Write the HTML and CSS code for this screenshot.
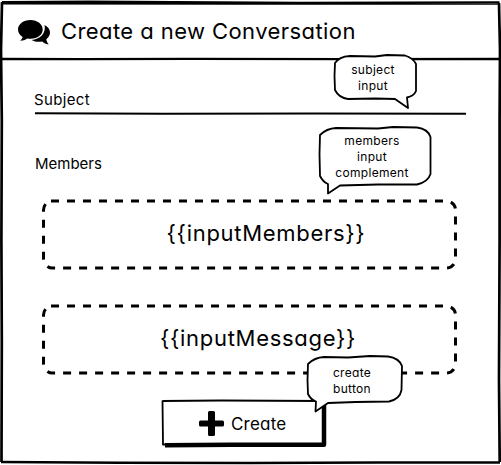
FILE: index.html
```html
<!DOCTYPE html>
<html lang="en">
<head>
<meta charset="utf-8">
<title>Create a new Conversation</title>
<link rel="stylesheet" href="styles.css">
</head>
<body>
<main class="window">
  <svg class="sketch frame" viewBox="0 0 501 465" aria-hidden="true">
    <path d="M2 2.2 L90 1.8 L300 3 L499.5 2.5 M2 3.4 L240 3.6 L499 3.5" stroke-width="2.4"/>
    <path d="M2 2 L1 50 L1.8 120 L1.4 240 L1.8 340 L1.5 462" stroke-width="2.7"/>
    <path d="M499 3 L500 50 L499.6 120 L499.6 240 L499 380 L499.7 462" stroke-width="2.7"/>
    <path d="M1 462 L120 462.8 L250 463 L380 462.5 L500 462.5" stroke-width="2.5"/>
    <path d="M0 59 L80 59.2 L190 58.9 L350 59.2 L501 59" stroke-width="2.3"/>
  </svg>
  <header class="header">
    <svg class="chat" viewBox="0 0 33 26" aria-hidden="true">
      <path d="M12.5 0C5.4 0 0 4.2 0 9.5c0 3.2 1.8 5.8 4.6 7.5-.3 1.500-1.200 2.600-2.400 3.700 2.700-.1 5-.9 7-2.300 1.100.2 2.100.3 3.300.3C19.500 18.700 24.700 14.700 24.700 9.500S19.500 0 12.500 0z"/>
      <path d="M26.500 5c3.500 1.700 5.500 4.300 5.500 7.500 0 2.800-1.500 5.100-3.700 6.700.2 1.900 1.100 3.400 2.500 5.300-2.900-.4-4.900-1.400-6.700-3-3.900.7-7.600.1-10.500-1.600C21.600 19.500 28.500 13.500 26.500 5z"/>
    </svg>
    <h1 class="title">Create a new Conversation</h1>
  </header>
  <section class="form">
    <label class="label subject">Subject</label>
    <svg class="sketch rule" viewBox="0 0 434 4" aria-hidden="true"><path d="M1 1.300L130 1.800 280 1.500 432 1.800" stroke-width="2"/></svg>
    <label class="label members">Members</label>
    <div class="slot">
      <svg class="sketch outline" viewBox="0 0 417 71" aria-hidden="true"><path class="dashes" d="M10 2H405.500a9 9 0 0 1 9 9V60a9 9 0 0 1-9 9H11.500a9 9 0 0 1-9-9V11a9 9 0 0 1 7.500-9"/></svg>
      <span class="slot-text slot-members">{{inputMembers}}</span>
    </div>
    <div class="slot slot-last">
      <svg class="sketch outline" viewBox="0 0 417 71" aria-hidden="true"><path class="dashes" d="M10 2H405.500a9 9 0 0 1 9 9V60a9 9 0 0 1-9 9H11.500a9 9 0 0 1-9-9V11a9 9 0 0 1 7.500-9"/></svg>
      <span class="slot-text slot-message">{{inputMessage}}</span>
    </div>
    <button class="create" type="button">
      <svg class="sketch button-outline" viewBox="0 0 166 50" aria-hidden="true">
        <path d="M1.500 2L60 1.500 161 2M1.500 1.500L2 45.500H8" stroke-width="1.800"/>
        <path d="M4 46.300L70 45.700 163 45.800V2" stroke-width="4.500"/>
      </svg>
      <svg class="plus" viewBox="0 0 25 25" aria-hidden="true"><path d="M10.500 0h4q1.500 0 1.500 1.500V9.500h7.500q1.500 0 1.500 1.500v3q0 1.500-1.500 1.500H16v8q0 1.500-1.500 1.500h-4Q9 25 9 23.500v-8H1.500Q0 15.500 0 14v-3Q0 9.500 1.500 9.500H9v-8Q9 0 10.500 0z"/></svg>
      <span class="create-text">Create</span>
    </button>
  </section>
  <aside class="note note-subject">
    <svg class="sketch bubble" viewBox="0 0 86 56" aria-hidden="true"><path d="M2 9C5 4 11 2.300 17 2L42 2.500 54 1 72 1.500Q80 4 83 10L83 37Q81 42 74 43.500L75 54 62 45 42 44.500 15 45Q6 44 2 36L1.500 22Z"/></svg>
    <span>subject<br>input</span>
  </aside>
  <aside class="note note-members">
    <svg class="sketch bubble" viewBox="0 0 115 70" aria-hidden="true"><path d="M2 9C7 4 12 2.300 18 2L60 2.500 75 1 99 1.500Q110 3 112.500 11L112.500 48Q110 56 99 58.500L60 58.500 22 59.500 10 67.500 10 58Q5 56 2 50L1.500 28Z"/></svg>
    <span>members<br>input<br>complement</span>
  </aside>
  <aside class="note note-create">
    <svg class="sketch bubble" viewBox="0 0 98 60" aria-hidden="true"><path d="M2 9C7 4 12 2.300 18 2L42 2.500 64 1 82 1.500Q93 3 96 11L95.500 35Q94 44 83 46.500L50 47 22 48 9.500 56.500 10 46.500Q5 45 2 39L1.500 25Z"/></svg>
    <span>create<br>button</span>
  </aside>
</main>
</body>
</html>
```

FILE: styles.css
```css
* { box-sizing: border-box; }
body { margin: 0; background: #fff; color: #000; font-family: Inter, "Liberation Sans", sans-serif; font-feature-settings: "cv11" 1; overflow: hidden; }
.window { position: relative; width: 501px; height: 465px; display: flex; flex-direction: column; }
.sketch { fill: none; stroke: #000; stroke-linejoin: round; display: block; }
.frame { position: absolute; inset: 0; width: 501px; height: 465px; }
.header { height: 60px; display: flex; align-items: flex-start; padding: 20px 0 0 18px; gap: 10px; }
.chat { width: 33px; height: 26px; flex: none; }
.title { margin: -3px 0 0; font-size: 22px; line-height: 28px; font-weight: 400; white-space: nowrap; letter-spacing: 0.42px; }
.form { display: flex; flex-direction: column; padding: 30px 34px 0; }
.label { font-size: 15px; line-height: 20px; }
.subject { letter-spacing: 0.35px; }
.rule { width: 434px; height: 4px; margin-top: 2px; }
.members { margin: 38px 0 0 1px; }
.slot { position: relative; width: 417px; height: 71px; margin: 25px 0 0 7px; display: flex; justify-content: center; }
.slot-last { margin-top: 34px; }
.outline { position: absolute; inset: 0; width: 417px; height: 71px; }
.dashes { stroke-width: 3; stroke-dasharray: 8 8; }
.slot-text { font-size: 22px; line-height: 28px; white-space: nowrap; margin-top: 20px; letter-spacing: 0.7px; }
.slot-members { margin-left: 33px; }
.slot-message { margin-left: 17px; }
.create { position: relative; width: 166px; height: 50px; margin: 24px 0 0 127px; border: 0; padding: 0 0 2px 38px; background: none; color: inherit; font: inherit; font-feature-settings: inherit; display: flex; align-items: center; gap: 7px; }
.button-outline { position: absolute; inset: 0; width: 166px; height: 50px; }
.plus { width: 25px; height: 25px; flex: none; }
.create-text { font-size: 17px; letter-spacing: 0.2px; padding-top: 1px; }
.note { position: absolute; display: flex; justify-content: center; text-align: center; font-size: 12px; line-height: 16px; padding-top: 7px; letter-spacing: 0.3px; }
.note span { position: relative; }
.bubble { position: absolute; left: 0; top: 0; width: 100%; height: 100%; }
.bubble path { fill: #fff; stroke-width: 1.8; }
.note-subject { left: 333px; top: 54px; width: 86px; height: 56px; padding-top: 8px; padding-right: 6px; }
.note-members { left: 318px; top: 126px; width: 115px; height: 70px; padding-right: 7px; }
.note-create { left: 306px; top: 355px; width: 98px; height: 60px; padding-top: 10px; padding-right: 6px; }
```
